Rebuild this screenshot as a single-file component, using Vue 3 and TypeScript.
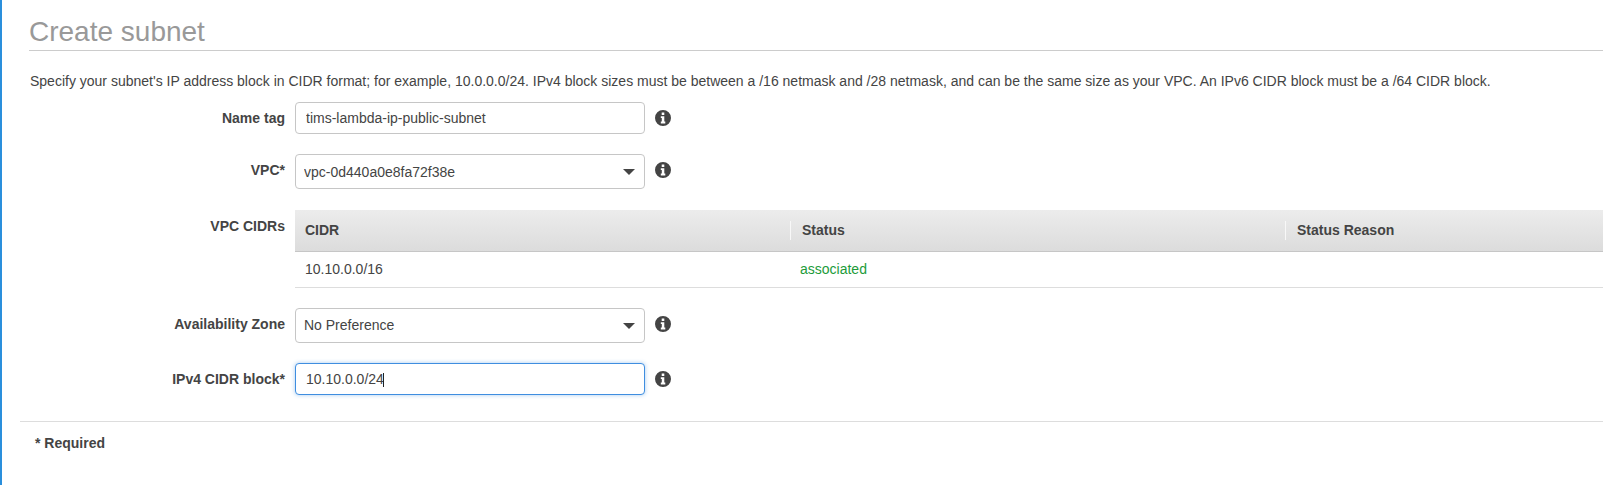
<script setup lang="ts">
const info =
  "M8 0a8 8 0 1 0 0 16A8 8 0 0 0 8 0ZM6.7 2.6h2.6v2.3H6.7ZM5.8 6.2h3.5v5.3h1v1.9H5.8v-1.9h1V8.100h-1Z";
</script>

<template>
  <div class="page">
    <h2 class="title">Create subnet</h2>
    <p class="intro">
      Specify your subnet's IP address block in CIDR format; for example, 10.0.0.0/24. IPv4 block sizes must be between a /16 netmask and /28 netmask, and can be the same size as your VPC. An IPv6 CIDR block must be a /64 CIDR block.
    </p>

    <div class="form">
      <div class="row row-name">
        <label class="label">Name tag</label>
        <input class="control input" type="text" value="tims-lambda-ip-public-subnet" />
        <svg class="info" viewBox="0 0 16 16"><path :d="info" fill-rule="evenodd" /></svg>
      </div>

      <div class="row row-vpc">
        <label class="label">VPC*</label>
        <div class="select-wrap">
          <select class="control select">
            <option>vpc-0d440a0e8fa72f38e</option>
          </select>
          <span class="arrow"></span>
        </div>
        <svg class="info" viewBox="0 0 16 16"><path :d="info" fill-rule="evenodd" /></svg>
      </div>

      <div class="row-table">
        <div class="label label-table">VPC CIDRs</div>
        <table class="cidrs">
          <thead>
            <tr>
              <th class="col-cidr"><span>CIDR</span></th>
              <th class="col-status"><span>Status</span></th>
              <th><span>Status Reason</span></th>
            </tr>
          </thead>
          <tbody>
            <tr>
              <td>10.10.0.0/16</td>
              <td class="ok">associated</td>
              <td></td>
            </tr>
          </tbody>
        </table>
      </div>

      <div class="row row-az">
        <label class="label">Availability Zone</label>
        <div class="select-wrap">
          <select class="control select">
            <option>No Preference</option>
          </select>
          <span class="arrow"></span>
        </div>
        <svg class="info" viewBox="0 0 16 16"><path :d="info" fill-rule="evenodd" /></svg>
      </div>

      <div class="row row-block">
        <label class="label">IPv4 CIDR block*</label>
        <div class="select-wrap">
          <input class="control input is-focused" type="text" value="10.10.0.0/24" />
          <span class="caret"></span>
        </div>
        <svg class="info" viewBox="0 0 16 16"><path :d="info" fill-rule="evenodd" /></svg>
      </div>
    </div>

    <div class="footer"><span class="required">* Required</span></div>
  </div>
</template>

<style>
html,
body {
  margin: 0;
  background: #fff;
}
</style>

<style scoped>
.page {
  height: 485px;
  box-sizing: border-box;
  border-left: 2px solid #2a8fdc;
  padding-left: 18px;
  overflow: hidden;
  font-family: "Liberation Sans", Arial, sans-serif;
  font-size: 14px;
  color: #444;
}

.title {
  margin: 0 0 0 9px;
  height: 51px;
  box-sizing: border-box;
  padding-top: 16px;
  border-bottom: 1px solid #ccc;
  font-size: 28px;
  font-weight: 400;
  line-height: 32px;
  color: #999;
}

.intro {
  margin: 22px 0 0 10px;
  line-height: 16px;
  white-space: nowrap;
}

.form {
  margin-top: 13px;
}

.row {
  display: flex;
  align-items: flex-start;
}

.row-vpc {
  margin-top: 20px;
}

.row-table {
  display: flex;
  margin-top: 21px;
}

.row-az {
  margin-top: 20px;
}

.row-block {
  margin-top: 20px;
}

.label {
  width: 265px;
  flex: none;
  margin-right: 10px;
  padding-top: 8px;
  text-align: right;
  font-weight: 700;
  line-height: 16px;
}

.control {
  display: block;
  width: 350px;
  box-sizing: border-box;
  border: 1px solid #c6c6c6;
  border-radius: 4px;
  background: #fff;
  font: inherit;
  color: #444;
  outline: none;
}

.input {
  height: 32px;
  padding: 0 10px;
}

.input.is-focused {
  border-color: #3f8ee0;
  box-shadow: 0 0 4px rgba(63, 142, 224, 0.45);
}

.select {
  height: 35px;
  padding: 0 24px 0 8px;
  appearance: none;
}

.select-wrap {
  position: relative;
  flex: none;
}

.arrow {
  position: absolute;
  right: 10px;
  top: 15px;
  border-left: 6px solid transparent;
  border-right: 6px solid transparent;
  border-top: 6px solid #444;
}

.caret {
  position: absolute;
  left: 88px;
  top: 10px;
  width: 1px;
  height: 14px;
  background: #222;
}

.info {
  width: 16px;
  height: 16px;
  flex: none;
  margin: 8px 0 0 10px;
  fill: #444;
}

.cidrs {
  flex: 1;
  min-width: 0;
  border-collapse: collapse;
  table-layout: fixed;
}

.cidrs th {
  height: 41px;
  padding: 0;
  box-sizing: border-box;
  background: linear-gradient(#ececec, #dcdcdc);
  border-bottom: 1px solid #c6c6c6;
  text-align: left;
  font-weight: 700;
}

.cidrs th span {
  display: flex;
  align-items: center;
  height: 19px;
  padding-left: 11px;
  border-left: 1px solid #f8f8f8;
}

.cidrs th:first-child span {
  border-left: 0;
  padding-left: 10px;
}

.col-cidr {
  width: 495px;
}

.col-status {
  width: 495px;
}

.cidrs td {
  height: 35px;
  padding: 0 0 0 10px;
  border-bottom: 1px solid #ddd;
}

.cidrs td.ok {
  color: #1d9b3a;
}

.footer {
  margin-top: 26px;
  border-top: 1px solid #ddd;
  padding: 13px 0 0 15px;
}

.required {
  font-weight: 700;
  line-height: 16px;
}
</style>
